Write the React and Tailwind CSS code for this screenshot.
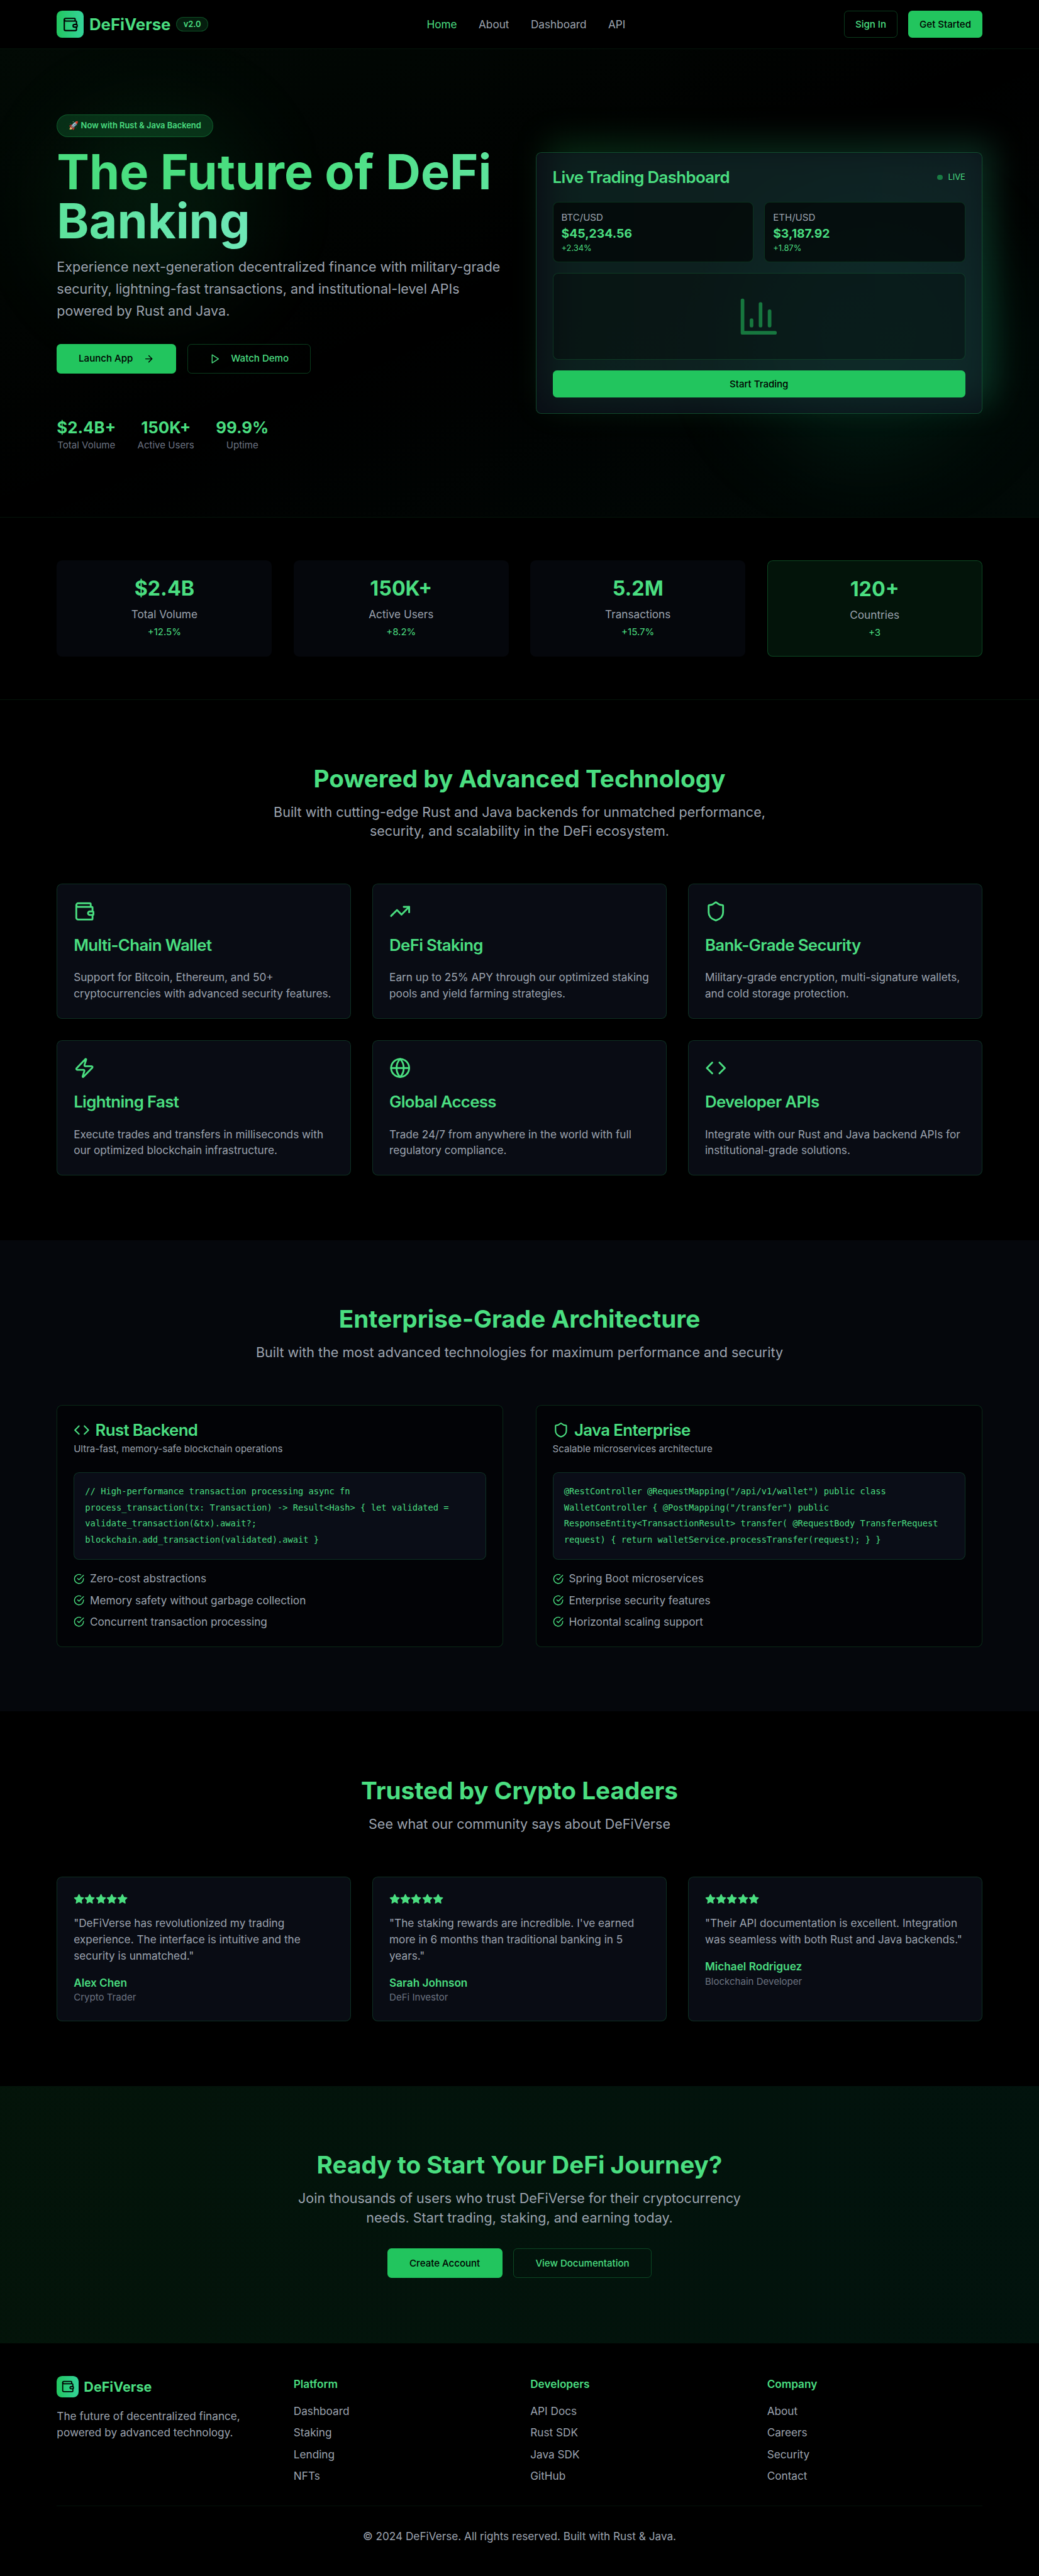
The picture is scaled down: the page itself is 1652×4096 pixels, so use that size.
import React from "react";
import {
  Wallet,
  TrendingUp,
  Shield,
  Zap,
  Globe,
  Code,
  ArrowRight,
} from "lucide-react";

const Svg = ({ className, children }) => (
  <svg
    viewBox="0 0 24 24"
    fill="none"
    stroke="currentColor"
    strokeWidth="2"
    strokeLinecap="round"
    strokeLinejoin="round"
    className={className}
  >
    {children}
  </svg>
);

const PlayIcon = ({ className }) => (
  <Svg className={className}>
    <polygon points="6 3 20 12 6 21 6 3" />
  </Svg>
);

const BarChartIcon = ({ className }) => (
  <Svg className={className}>
    <path d="M3 3v18h18" />
    <path d="M18 17V9" />
    <path d="M13 17V5" />
    <path d="M8 17v-3" />
  </Svg>
);

const CheckIcon = ({ className }) => (
  <Svg className={className}>
    <path d="M22 11.08V12a10 10 0 1 1-5.93-9.14" />
    <path d="m9 11 3 3L22 4" />
  </Svg>
);

const StarIcon = ({ className }) => (
  <Svg className={className}>
    <polygon
      fill="currentColor"
      points="12 2 15.09 8.26 22 9.27 17 14.14 18.18 21.02 12 17.77 5.82 21.02 7 14.14 2 9.27 8.91 8.26 12 2"
    />
  </Svg>
);

const Container = ({ className = "", children }) => (
  <div className={`mx-auto max-w-[1400px] px-4 ${className}`}>{children}</div>
);

const PrimaryButton = ({ className = "", children }) => (
  <button
    className={`inline-flex items-center justify-center gap-2 rounded-md bg-[#22c55e] text-sm font-medium whitespace-nowrap text-black ${className}`}
  >
    {children}
  </button>
);

const OutlineButton = ({ className = "", children }) => (
  <button
    className={`inline-flex items-center justify-center gap-2 rounded-md border border-[#22c55e]/30 text-sm font-medium whitespace-nowrap text-[#4ade80] ${className}`}
  >
    {children}
  </button>
);

const SectionHeading = ({ title, text }) => (
  <div className="mb-16 text-center">
    <h2 className="mb-4 text-4xl font-bold text-[#4ade80]">{title}</h2>
    <p className="mx-auto max-w-[800px] text-xl text-[#9ca3af]">{text}</p>
  </div>
);

const Header = () => (
  <header className="border-b border-[#22c55e]/10 bg-black">
    <Container className="flex items-center justify-between py-4">
      <div className="flex items-center gap-2">
        <div className="flex h-10 w-10 items-center justify-center rounded-lg bg-linear-to-r from-[#22c55e] to-[#34d399]">
          <Wallet className="h-6 w-6 text-black" />
        </div>
        <span className="text-2xl font-bold text-[#4ade80]">DeFiVerse</span>
        <span className="w-[47.5px] rounded-full border border-[#22c55e]/30 bg-[#22c55e]/15 py-0.5 text-center text-xs font-semibold text-[#4ade80]">
          v2.0
        </span>
      </div>
      <nav className="flex items-center gap-8 text-base">
        <a className="text-[#4ade80]">Home</a>
        <a className="text-[#9ca3af]">About</a>
        <a className="text-[#9ca3af]">Dashboard</a>
        <a className="text-[#9ca3af]">API</a>
      </nav>
      <div className="flex items-center gap-4">
        <OutlineButton className="h-10 w-[79.5px]">Sign In</OutlineButton>
        <PrimaryButton className="h-10 w-[109px]">Get Started</PrimaryButton>
      </div>
    </Container>
  </header>
);

const heroStats = [
  ["$2.4B+", "Total Volume"],
  ["150K+", "Active Users"],
  ["99.9%", "Uptime"],
];

const pairs = [
  ["BTC/USD", "$45,234.56", "+2.34%"],
  ["ETH/USD", "$3,187.92", "+1.87%"],
];

const TradingCard = () => (
  <div className="relative">
    <div className="absolute -top-4 -right-4 h-full w-full rounded-lg bg-linear-to-r from-[#22c55e]/20 to-[#34d399]/20 blur-xl" />
    <div className="relative rounded-lg border border-[#22c55e]/30 bg-[#111827]/50">
      <div className="flex items-center justify-between p-6">
        <h3 className="text-2xl leading-none font-semibold tracking-tight text-[#4ade80]">
          Live Trading Dashboard
        </h3>
        <div className="flex items-center gap-2">
          <span className="h-2 w-2 rounded-full bg-[#22c55e]/55" />
          <span className="text-xs text-[#4ade80]">LIVE</span>
        </div>
      </div>
      <div className="space-y-4 px-6 pb-[23px]">
        <div className="grid grid-cols-2 gap-4">
          {pairs.map(([pair, price, change]) => (
            <div key={pair} className="rounded-lg border border-[#22c55e]/20 bg-black/60 p-3">
              <div className="text-sm text-[#9ca3af]">{pair}</div>
              <div className="text-lg font-bold text-[#4ade80]">{price}</div>
              <div className="text-xs text-[#4ade80]">{change}</div>
            </div>
          ))}
        </div>
        <div className="flex h-32 items-center justify-center rounded-lg border border-[#22c55e]/20 bg-black/30">
          <BarChartIcon className="h-16 w-16 text-[#22c55e]/55" />
        </div>
        <PrimaryButton className="h-10 w-full">Start Trading</PrimaryButton>
      </div>
    </div>
  </div>
);

const Hero = () => (
  <section className="relative overflow-hidden bg-linear-to-br from-[#22c55e]/5 via-transparent to-[#10b981]/5 py-24">
    <div className="absolute top-[90px] left-[84px] h-72 w-72 rounded-full bg-[#22c55e]/10 blur-3xl" />
    <div className="absolute right-[60px] bottom-20 h-96 w-96 rounded-full bg-[#10b981]/10 blur-3xl" />
    <Container className="relative grid grid-cols-2 items-center gap-12">
      <div>
        <div className="flex">
          <span className="w-[231px] rounded-full border border-[#22c55e]/30 bg-[#22c55e]/20 py-2 text-center text-xs font-semibold whitespace-nowrap text-[#4ade80]">
            🚀 Now with Rust &amp; Java Backend
          </span>
        </div>
        <h1 className="mt-4 mb-4 text-7xl leading-none font-bold">
          <span className="bg-linear-to-r from-[#4ade80] from-40% to-[#6ee7b7] bg-clip-text text-transparent">
            The Future of DeFi Banking
          </span>
        </h1>
        <p className="text-xl leading-relaxed text-[#9ca3af]">
          Experience next-generation decentralized finance with military-grade
          security, lightning-fast transactions, and institutional-level APIs
          powered by Rust and Java.
        </p>
        <div className="mt-8 flex gap-4">
          <PrimaryButton className="h-11 w-[176.7px]">
            Launch App
            <ArrowRight className="ml-2 h-4 w-4" />
          </PrimaryButton>
          <OutlineButton className="h-11 w-[183px]">
            <PlayIcon className="mr-2 h-4 w-4" />
            Watch Demo
          </OutlineButton>
        </div>
        <div className="mt-16 flex gap-8">
          {heroStats.map(([value, label]) => (
            <div key={label} className="text-center">
              <div className="text-2xl font-bold text-[#4ade80]">{value}</div>
              <div className="text-sm text-[#6b7280]">{label}</div>
            </div>
          ))}
        </div>
      </div>
      <TradingCard />
    </Container>
  </section>
);

const stats = [
  ["$2.4B", "Total Volume", "+12.5%"],
  ["150K+", "Active Users", "+8.2%"],
  ["5.2M", "Transactions", "+15.7%"],
  ["120+", "Countries", "+3"],
];

const Stats = () => (
  <section className="border-y border-[#22c55e]/10 pt-[63.5px] pb-[63.5px]">
    <Container className="grid grid-cols-4 gap-8">
      {stats.map(([value, label, change], i) => (
        <div
          key={label}
          className={
            i === 3
              ? "rounded-lg border border-[#22c55e]/30 bg-[#22c55e]/10 p-6 text-center"
              : "rounded-lg bg-[#111827]/30 p-6 text-center"
          }
        >
          <div className="mb-2 text-3xl font-bold text-[#4ade80]">{value}</div>
          <div className="text-base text-[#9ca3af]">{label}</div>
          <div className="mt-1 text-sm text-[#4ade80]">{change}</div>
        </div>
      ))}
    </Container>
  </section>
);

const features = [
  [Wallet, "Multi-Chain Wallet", "Support for Bitcoin, Ethereum, and 50+ cryptocurrencies with advanced security features."],
  [TrendingUp, "DeFi Staking", "Earn up to 25% APY through our optimized staking pools and yield farming strategies."],
  [Shield, "Bank-Grade Security", "Military-grade encryption, multi-signature wallets, and cold storage protection."],
  [Zap, "Lightning Fast", "Execute trades and transfers in milliseconds with our optimized blockchain infrastructure."],
  [Globe, "Global Access", "Trade 24/7 from anywhere in the world with full regulatory compliance."],
  [Code, "Developer APIs", "Integrate with our Rust and Java backend APIs for institutional-grade solutions."],
];

const Features = () => (
  <section className="pt-[95.5px] pb-[95.5px]">
    <Container>
      <SectionHeading
        title="Powered by Advanced Technology"
        text="Built with cutting-edge Rust and Java backends for unmatched performance, security, and scalability in the DeFi ecosystem."
      />
      <div className="grid grid-cols-3 gap-8">
        {features.map(([Icon, title, text]) => (
          <div key={title} className="rounded-lg border border-[#22c55e]/20 bg-[#111827]/50 p-6">
            <Icon className="h-8 w-8 text-[#4ade80]" />
            <h3 className="mt-[22px] mb-6 text-2xl leading-none font-semibold tracking-tight text-[#4ade80]">
              {title}
            </h3>
            <p className="text-base text-[#9ca3af]">{text}</p>
          </div>
        ))}
      </div>
    </Container>
  </section>
);

const backends = [
  {
    Icon: Code,
    title: "Rust Backend",
    text: "Ultra-fast, memory-safe blockchain operations",
    code: "// High-performance transaction processing async fn process_transaction(tx: Transaction) -> Result<Hash> { let validated = validate_transaction(&tx).await?; blockchain.add_transaction(validated).await }",
    items: ["Zero-cost abstractions", "Memory safety without garbage collection", "Concurrent transaction processing"],
  },
  {
    Icon: Shield,
    title: "Java Enterprise",
    text: "Scalable microservices architecture",
    code: '@RestController @RequestMapping("/api/v1/wallet") public class WalletController { @PostMapping("/transfer") public ResponseEntity<TransactionResult> transfer( @RequestBody TransferRequest request) { return walletService.processTransfer(request); } }',
    items: ["Spring Boot microservices", "Enterprise security features", "Horizontal scaling support"],
  },
];

const Architecture = () => (
  <section className="bg-[#111827]/30 pt-24 pb-[95.5px]">
    <Container>
      <SectionHeading
        title="Enterprise-Grade Architecture"
        text="Built with the most advanced technologies for maximum performance and security"
      />
      <div className="grid grid-cols-2 gap-12">
        {backends.map(({ Icon, title, text, code, items }) => (
          <div key={title} className="rounded-lg border border-[#22c55e]/20 bg-black/50 p-6">
            <h3 className="flex items-center gap-2 text-2xl leading-none font-semibold tracking-tight text-[#4ade80]">
              <Icon className="h-6 w-6" />
              {title}
            </h3>
            <p className="mt-1.5 text-sm text-[#9ca3af]">{text}</p>
            <div className="mt-6 rounded-lg border border-[#22c55e]/20 bg-[#111827]/50 py-4 pr-5 pl-4 font-['DejaVu_Sans_Mono',monospace] text-[12.77px] leading-6 text-[#4ade80]">
              {code}
            </div>
            <ul className="mt-4 space-y-2">
              {items.map((item) => (
                <li key={item} className="flex items-center gap-2 text-base text-[#9ca3af]">
                  <CheckIcon className="h-4 w-4 text-[#4ade80]" />
                  {item}
                </li>
              ))}
            </ul>
          </div>
        ))}
      </div>
    </Container>
  </section>
);

const testimonials = [
  ["Alex Chen", "Crypto Trader", '"DeFiVerse has revolutionized my trading experience. The interface is intuitive and the security is unmatched."'],
  ["Sarah Johnson", "DeFi Investor", '"The staking rewards are incredible. I\'ve earned more in 6 months than traditional banking in 5 years."'],
  ["Michael Rodriguez", "Blockchain Developer", '"Their API documentation is excellent. Integration was seamless with both Rust and Java backends."'],
];

const Testimonials = () => (
  <section className="py-24">
    <Container>
      <SectionHeading
        title="Trusted by Crypto Leaders"
        text="See what our community says about DeFiVerse"
      />
      <div className="grid grid-cols-3 gap-8">
        {testimonials.map(([name, role, quote]) => (
          <div key={name} className="rounded-lg border border-[#22c55e]/20 bg-[#111827]/50 p-6">
            <div className="mb-4 flex text-[#4ade80]">
              {[0, 1, 2, 3, 4].map((n) => (
                <StarIcon key={n} className="h-4 w-4" />
              ))}
            </div>
            <p className="mb-4 text-base text-[#9ca3af]">{quote}</p>
            <div className="text-base font-semibold text-[#4ade80]">{name}</div>
            <div className="text-sm text-[#6b7280]">{role}</div>
          </div>
        ))}
      </div>
    </Container>
  </section>
);

const CallToAction = () => (
  <section className="bg-linear-to-r from-[#22c55e]/10 to-[#10b981]/10 py-24">
    <Container className="text-center">
      <h2 className="mb-4 text-4xl font-bold text-[#4ade80]">
        Ready to Start Your DeFi Journey?
      </h2>
      <p className="mx-auto mb-8 max-w-2xl text-xl text-[#9ca3af]">
        Join thousands of users who trust DeFiVerse for their cryptocurrency
        needs. Start trading, staking, and earning today.
      </p>
      <div className="flex justify-center gap-4">
        <PrimaryButton className="h-11 w-[170px]">Create Account</PrimaryButton>
        <OutlineButton className="h-11 w-[205px]">View Documentation</OutlineButton>
      </div>
    </Container>
  </section>
);

const footerColumns = [
  ["Platform", ["Dashboard", "Staking", "Lending", "NFTs"]],
  ["Developers", ["API Docs", "Rust SDK", "Java SDK", "GitHub"]],
  ["Company", ["About", "Careers", "Security", "Contact"]],
];

const Footer = () => (
  <footer className="pt-[48.5px] pb-[49px]">
    <Container>
      <div className="grid grid-cols-4 gap-8">
        <div>
          <div className="mb-4 flex items-center gap-2">
            <div className="flex h-8 w-8 items-center justify-center rounded-lg bg-linear-to-r from-[#22c55e] to-[#34d399]">
              <Wallet className="h-5 w-5 text-black" />
            </div>
            <span className="text-xl font-bold text-[#4ade80]">DeFiVerse</span>
          </div>
          <p className="text-base text-[#9ca3af]">
            The future of decentralized finance, powered by advanced technology.
          </p>
        </div>
        {footerColumns.map(([title, links]) => (
          <div key={title}>
            <h4 className="mb-4 text-base font-semibold text-[#4ade80]">{title}</h4>
            <ul className="space-y-2 text-base text-[#9ca3af]">
              {links.map((link) => (
                <li key={link}>{link}</li>
              ))}
            </ul>
          </div>
        ))}
      </div>
      <div className="mt-8 border-t border-[#22c55e]/10 pt-8 text-center text-base text-[#9ca3af]">
        © 2024 DeFiVerse. All rights reserved. Built with Rust &amp; Java.
      </div>
    </Container>
  </footer>
);

export default function App() {
  return (
    <div className="bg-black font-['Inter',sans-serif] [zoom:1.0755]">
      <Header />
      <Hero />
      <Stats />
      <Features />
      <Architecture />
      <Testimonials />
      <CallToAction />
      <Footer />
    </div>
  );
}
